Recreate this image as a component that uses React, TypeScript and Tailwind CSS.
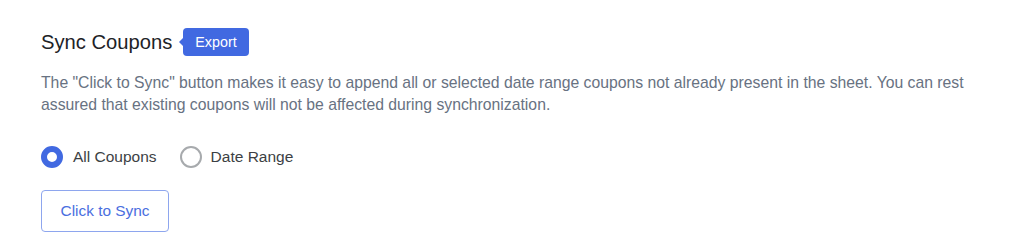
import React from "react";

export default function App() {
  return (
    <div className="w-[1024px] h-[252px] bg-white font-[Liberation_Sans,Arial,sans-serif] pl-[41px] pt-[28px]">
      <div className="flex items-center h-[28px]">
        <h2 className="text-[20.2px] leading-[28px] text-[#1d2327]">Sync Coupons</h2>
        <div className="relative ml-[11px] h-[28px] px-[12px] rounded-[4px] bg-[#4169e1] text-white text-[14.3px] leading-[28px]">
          <span className="absolute left-[-4px] top-[10px] w-0 h-0 border-y-[4px] border-y-transparent border-r-[4px] border-r-[#4169e1]" />
          Export
        </div>
      </div>
      <p className="mt-[16px] w-[960px] text-[15.75px] leading-[22px] text-[#687282]">
        The "Click to Sync" button makes it easy to append all or selected date range coupons not already present in the sheet. You can rest assured that existing coupons will not be affected during synchronization.
      </p>
      <div className="mt-[30px] flex items-center h-[22px] text-[15.5px] text-[#3c3f44]">
        <label className="flex items-center">
          <span className="w-[22px] h-[22px] rounded-full border-[6px] border-[#4169e1] bg-white" />
          <span className="ml-[10px]">All Coupons</span>
        </label>
        <label className="flex items-center ml-[23px]">
          <span className="w-[22px] h-[22px] rounded-full border-2 border-[#a7aaad] bg-white" />
          <span className="ml-[9px]">Date Range</span>
        </label>
      </div>
      <button className="mt-[22px] w-[128px] h-[42px] rounded-[4px] border border-[#8ea6ee] text-[15.4px] text-[#4a6ee0] bg-white">
        Click to Sync
      </button>
    </div>
  );
}
